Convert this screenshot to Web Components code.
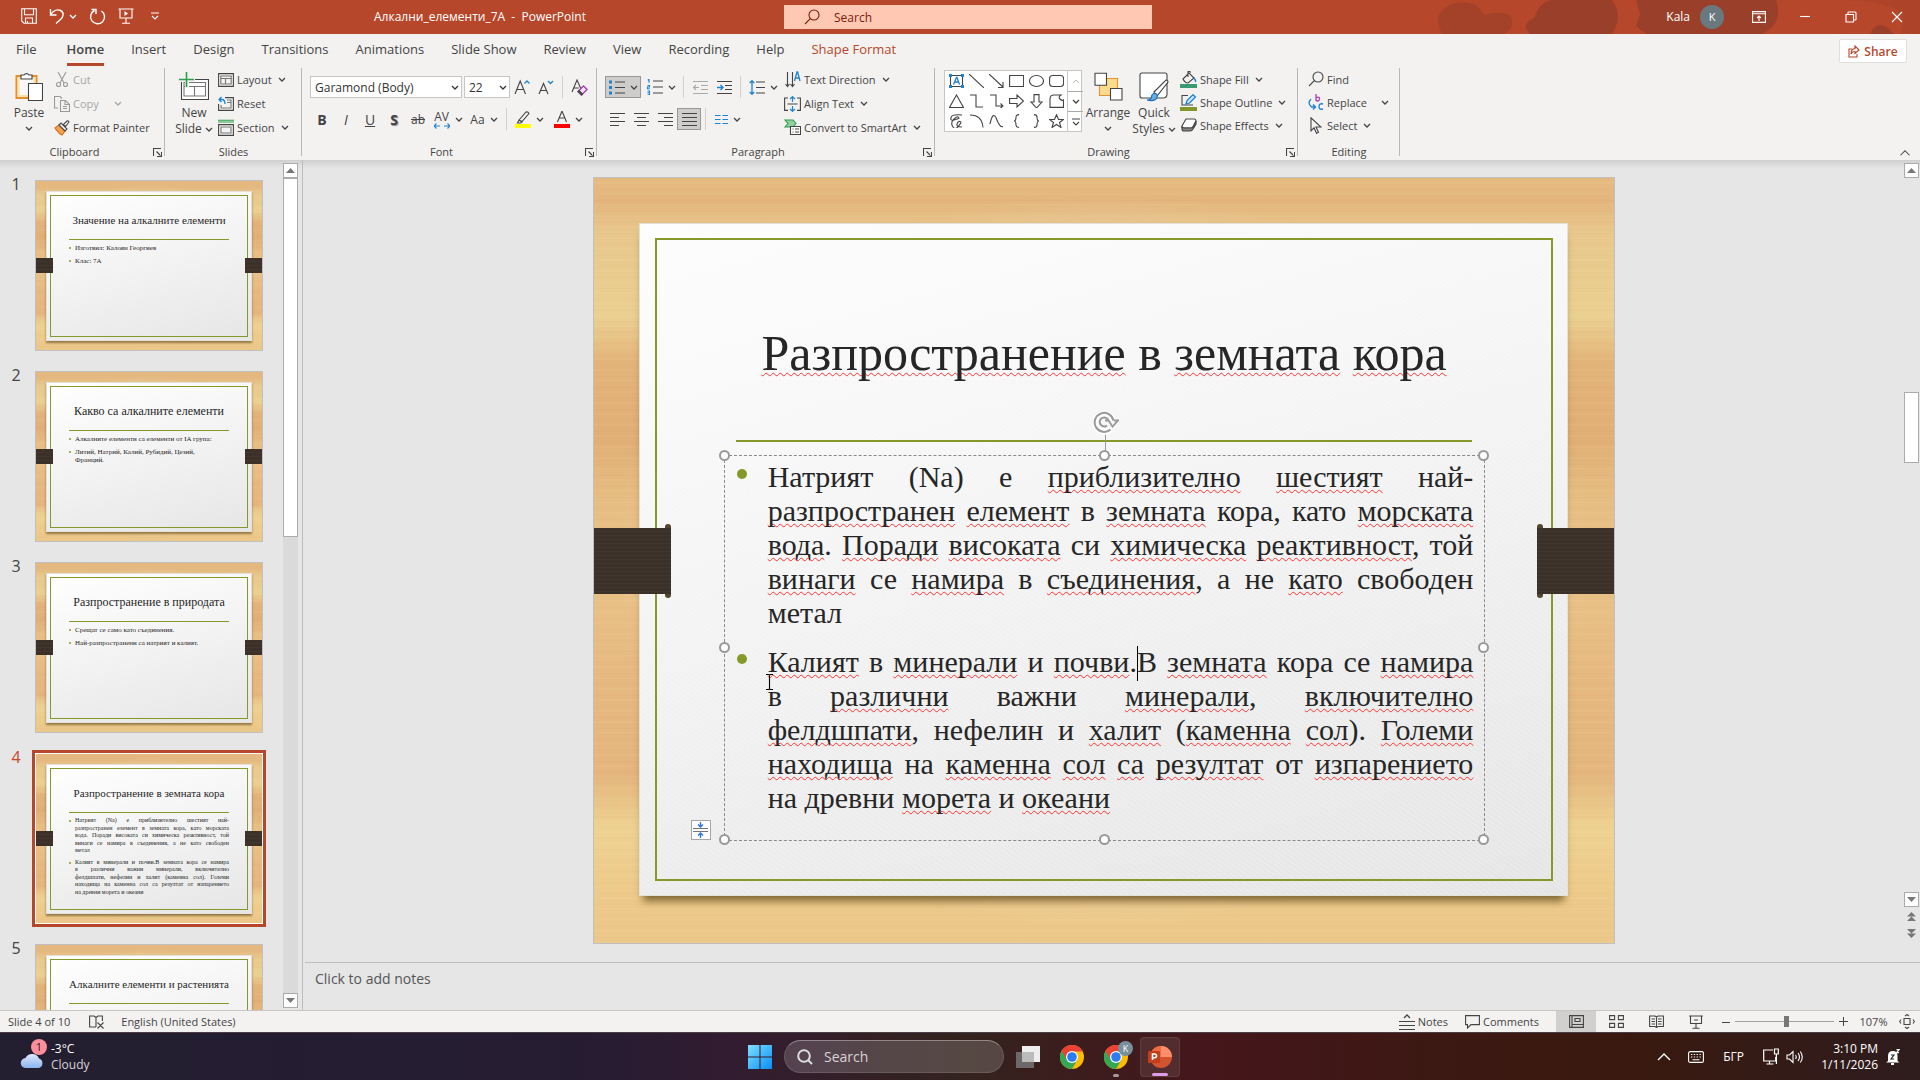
<!DOCTYPE html>
<html lang="en">
<head>
<meta charset="utf-8">
<title>PowerPoint</title>
<style>
    html, body {
        margin: 0;
        height: 100%;
    }
    body {
        font-family: "Open Sans", "Noto Sans", sans-serif;
        font-size: 12px;
        color: #444;
        overflow: hidden;
    }
</style>
</head>
<body>
<power-app></power-app>

<script>
const base = `
    * { box-sizing: border-box; }
    button, input, select, textarea {
        font: inherit;
        color: inherit;
        background: none;
        border: 0;
        padding: 0;
        margin: 0;
        border-radius: 0;
        outline: 0;
    }
    button { display: inline-flex; align-items: center; justify-content: center; white-space: nowrap; }
    a { color: inherit; text-decoration: none; }
`;

// name: [width, height, markup]
const icons = {
    chev: [8, 5, '<path d="M1 1l3 3 3-3" stroke-width="1.3"/>'],
    up: [16, 10, '<path d="M2 8l6-6 6 6" stroke-width="1.4"/>'],
    save: [16, 16, '<path d="M.7.7h14.6v14.6H3L.7 13zM3.5.7v6h9v-6M4.5 15v-5h7v5M6.5 15v-2"/>'],
    undo: [16, 16, '<path d="M1.5 1v6h6M1.5 7C4 3 8 1 11.5 2.5c4 2 3 6.5 0 9L7 15.5" stroke-width="1.4"/>'],
    redo: [17, 17, '<path d="M2.5 1.5h4.5v4.5M5.5 2.5A7 7 0 1 0 12.5 3" stroke-width="1.4"/>'],
    present: [16, 16, '<path d="M.5 1h15M2 1v9h12V1M8 10v5M4 15.3h8"/><path d="M6.5 3v5l3.5-2.5z" fill="currentColor" stroke="none"/>'],
    qat: [8, 8, '<path d="M0 1h8M1 4l3 3 3-3"/>'],
    find: [16, 16, '<circle cx="10" cy="6" r="5"/><path d="M6.3 9.7L1 15"/>'],
    ribbonopt: [14, 12, '<path d="M.6.6h12.8v10.8H.6zM.6 2.8h12.8M7 10V5M5 7l2-2 2 2"/>'],
    min: [12, 12, '<path d="M1 5.5h10"/>'],
    restore: [12, 12, '<path d="M1 3.5h7.5V11H1zM3 3.5V1.5q0-.5.5-.5H10q1 0 1 1v6.5q0 .5-.5.5H8.5"/>'],
    close: [12, 12, '<path d="M1 1l10 10M11 1L1 11"/>'],
    share: [12, 13, '<path d="M4 4H1v8h8V9M7 1l4 4-4 3.5V6.5Q4 6.5 3 9q0-5 4-5.5z"/>'],
    paste: [28, 31, '<path d="M1.5 5h20v22h-20z" fill="#fff" stroke="#e48f2b" stroke-width="2"/><path d="M3.5 7h16v18h-16z" fill="#f8f8f8" stroke="#fae1a5" stroke-width="2"/><path d="M6 8V4h3a3 3 0 0 1 5 0h3v4z" fill="#fff"/><path d="M13.5 12.5h14v17h-14z" fill="#fff"/>'],
    cut: [12, 17, '<path d="M2 1l6 11M10 1L4 12" stroke="#999"/><circle cx="2.5" cy="13.5" r="2" stroke="#999"/><circle cx="9.5" cy="13.5" r="2" stroke="#999"/>'],
    copy: [16, 16, '<path d="M4 12H.5V.5H6l2 2M6.5 4.5h5l4 4v7h-9zM11 4.5V8.5h4M9 10.5h4M9 12.5h4" stroke="#999"/>'],
    painter: [16, 16, '<path d="M1 8l4-3 6 6-3 4q-3-1-4-3.5Q2 10 1 8z" fill="#f5a04a" stroke="#d9701a"/><path d="M5 5l2-2 6 6-2 2z" fill="#fff"/><path d="M9.5 4.5L13 1q1.5-.5 2 1l-3.5 4.5z" fill="#fff"/>'],
    newslide: [30, 29, '<path d="M2.5 7.5h27v20h-27z" fill="#fff"/><path d="M5 10.5h21.5V24H5zM5 14.5h21.5M15.5 14.5V24" stroke="#777"/><path d="M8 0v16M0 8h16" stroke="#f3f2f1" stroke-width="4"/><path d="M7.5 0v15M0 7.5h15" stroke="#2e9e4b" stroke-width="1.6"/>'],
    layout: [16, 14, '<path d="M.6.6h14.8v12.8H.6z"/><path d="M2.8 3h10.4v8H2.8zM2.8 5.5h10.4M7.5 5.5V11" stroke="#777"/>'],
    reset: [16, 15, '<path d="M7 1.6h8.4v12.8H.6V8"/><path d="M9 4h4v8H3V9M9 6.5h4" stroke="#777"/><path d="M3.5 1L1 3.5 3.5 6M1 3.5h3.5Q7 4 7 8" stroke="#1e83d1" stroke-width="1.3"/>'],
    section: [16, 17, '<path d="M0 1.3h16M0 3h16" stroke="#2e9e4b"/><path d="M.6 5.6h14.8v10.8H.6z"/><path d="M3 8h10v6H3z" stroke="#777"/>'],
    launch: [9, 9, '<path d="M.5 8V.5H8M3.5 3.5l4 4M8.5 4v4.5H4"/>'],
    grow: [16, 17, '<path d="M1 15L6.2 2l5.3 13M2.8 10.5h7"/><path d="M10.5 4.5L13 2l2.5 2.5" stroke="#1e83d1" stroke-width="1.3"/>'],
    shrink: [16, 17, '<path d="M1 15L5.5 4.5l4.5 10.5M2.8 11.5h5.5"/><path d="M10 2l2.5 2.5L15 2" stroke="#1e83d1" stroke-width="1.3"/>'],
    clear: [17, 17, '<path d="M1 13L6 1l4 9M2.8 9h5"/><path d="M7 12.5L12.5 7 16 10.5 10.5 16z" fill="#f5e6f7" stroke="#a33fb0" stroke-width="1.4"/><path d="M8 11.5l3.5 3.5-1 1L7 12.5z" fill="#a33fb0"/>'],
    avarrows: [16, 6, '<path d="M0 3h6M2.5.5L0 3l2.5 2.5M10 3h6M13.5.5L16 3l-2.5 2.5" stroke="#1e83d1"/>'],
    hilite: [16, 17, '<path d="M4 9l7-8q2-.5 3 1.5l-7 8zM4 9l3 2-1.5 1H2.5z"/><path d="M0 13h16v4H0z" fill="#ff0" stroke="none"/>'],
    fontcolor: [16, 17, '<path d="M3.5 11L8 0l4.5 11M5 7h6"/><path d="M0 13h16v4H0z" fill="#f00" stroke="none"/>'],
    bullets: [16, 15, '<path d="M6 2h10M6 7.5h10M6 13h10"/><path d="M0 .5h3v3H0zM0 6h3v3H0zM0 11.5h3v3H0z" fill="#1e83d1" stroke="none"/>'],
    numbering: [16, 16, '<path d="M6 2h10M6 8h10M6 14h10"/><path d="M.8 1.2L2 .3v3.5M.5 6.5h2v1.5h-2v1.7h2.3M.5 12h2v3.7h-2M.5 13.8h2" stroke="#1e83d1"/>'],
    outdent: [15, 13, '<path d="M0 .5h15M8 4.5h7M8 8.5h7M0 12.5h15M6 6.5H.8M3 4L.6 6.5 3 9" stroke="#aaa"/>'],
    indent: [15, 13, '<path d="M0 .5h15M8 4.5h7M8 8.5h7M0 12.5h15"/><path d="M0 6.5h6M3.5 4L6 6.5 3.5 9" stroke="#1e83d1" stroke-width="1.4"/>'],
    linespace: [16, 15, '<path d="M7 2h9M7 7.5h9M7 13h9"/><path d="M3 .7v13.6M.7 3L3 .7 5.3 3M.7 12L3 14.3 5.3 12" stroke="#1e83d1" stroke-width="1.3"/>'],
    left: [15, 14, '<path d="M0 1.5h15M0 5.5h9M0 9.5h15M0 13.5h9"/>'],
    center: [15, 14, '<path d="M0 1.5h15M3 5.5h9M0 9.5h15M3 13.5h9"/>'],
    right: [15, 14, '<path d="M0 1.5h15M6 5.5h9M0 9.5h15M6 13.5h9"/>'],
    justify: [15, 14, '<path d="M0 1.5h15M0 5.5h15M0 9.5h15M0 13.5h15"/>'],
    columns: [13, 9, '<path d="M0 .5h5.5M0 4.5h5.5M0 8.5h5.5M7.5.5H13M7.5 4.5H13M7.5 8.5H13" stroke="#1e83d1"/>'],
    textdir: [16, 17, '<path d="M2.5 1v14M.5 13l2 2.5L4.5 13M7.5 1v14M5.5 13l2 2.5L9.5 13"/><path d="M9.5 10l2.5-9h.6L15 10M10.3 7h4" stroke="#1e83d1" stroke-width="1.3"/>'],
    aligntext: [17, 16, '<path d="M4 2H.6v12.4H4M13 2h3.4v12.4H13M3.5 8h10"/><path d="M8.5.7V6M6 3L8.5.7 11 3M8.5 15.3V10M6 13l2.5 2.3L11 13" stroke="#1e83d1" stroke-width="1.2"/>'],
    smartart: [17, 17, '<path d="M1 1h8l3 3.5L9 8H1l3-3.5z" fill="#93cf9f" stroke="#2e9e4b"/><path d="M6.5 7.5h10v8h-10z" fill="#fff"/><path d="M8.5 10h1M8.5 13h1M11 10h4M11 13h4"/>'],
    arrange: [29, 28, '<path d="M5.5 6h18v17h-18z" fill="#fbdc8c" stroke="#e8912d"/><path d="M1 .8h11.5v12H1zM16.5 16h11.5v11.5H16.5z" fill="#fff"/>'],
    quick: [30, 29, '<path d="M1 3q0-2 2-2h23q2 0 2 2v19q0 4-4 4H3q-2 0-2-2z" fill="#fff"/><path d="M15 20L27 8q2 0 2 2L18 24z" fill="#fff"/><path d="M8 28q5 0 4.5-4 2-4 5-2 2 3-1 5.5-3 2-8.5.5z" fill="#66aee6" stroke="#1e6fb5"/>'],
    fill: [17, 17, '<path d="M3 8l6-6 5 5-6 5q-3 0-5-4zM8 6V.7q2-1 2.5 1"/><path d="M14 7q2 2 1.5 4" stroke="#1e83d1" stroke-width="1.5"/><path d="M0 13h17v4H0z" fill="#3a9b72" stroke="none"/>'],
    outline: [17, 17, '<path d="M8 1.5H2V11h11" stroke="#444"/><path d="M6 10l1-3.5L13 .7l2.5 2.3-6 6z" stroke="#1e83d1" fill="#cfe7fa" stroke-width="1.3"/><path d="M0 13h17v4H0z" fill="#84972a" stroke="none"/>'],
    effects: [16, 14, '<path d="M5 1h8q2 0 2 2l-3 6q-1 1-2 1H2q-1.5 0-1-2z" fill="#fff"/><path d="M1 9v2q0 2 2 2h6q2 0 3-2l3-5V3l-3 6q-1 1-2 1H3z" fill="#888"/>'],
    replace: [16, 17, '<path d="M8 0v7M8 4q4-2 3.5 1T8 6.5" stroke="#a33fb0" stroke-width="1.3"/><path d="M3 5Q-1 9 3.5 13H7M5 10.5L7.5 13 5 15.5M15 10q-4-1-4 2.5t4 2.5" stroke="#1e83d1" stroke-width="1.4"/>'],
    select: [12, 17, '<path d="M1 .8v13l3-3 2.5 5.5 2-1L6 10h5z"/>'],
    txt: [15, 14, '<path d="M1.5 1.5h12v11h-12z"/><path d="M4.5 10.5l3-7h.5l2.5 7M5.5 8h4" stroke="#1e83d1" stroke-width="1.3"/><path d="M0 0h3v3H0zM12 0h3v3h-3zM0 11h3v3H0zM12 11h3v3h-3z" fill="#1e83d1" stroke="none"/>'],
    line: [15, 14, '<path d="M0 0l15 14"/>'],
    arrow: [15, 14, '<path d="M0 0l14 13M14 8v5.5H9"/>'],
    rect: [15, 14, '<path d="M.6 1.5h14v11h-14z"/>'],
    oval: [15, 14, '<ellipse cx="7.5" cy="7" rx="7" ry="5.5"/>'],
    rrect: [15, 14, '<rect x=".6" y="1.5" width="14" height="11" rx="3"/>'],
    tri: [15, 14, '<path d="M7.5 1l7 12.5h-14z"/>'],
    elbow: [15, 14, '<path d="M1 1h6v12h7"/>'],
    elbowa: [15, 14, '<path d="M1 1h6v11h7M11.5 9.5L14 12l-2.5 2"/>'],
    rarrow: [15, 14, '<path d="M.6 4.5H8V1l6.5 6L8 13V9.5H.6z"/>'],
    darrow: [15, 14, '<path d="M5 .6h5V8h3l-5.5 6L2 8h3z"/>'],
    blob: [15, 14, '<path d="M1 5q0-4 4-4h7q-3 2-1 4t3.5 1v7.4H1z"/>'],
    scrib: [15, 14, '<path d="M13 1Q3 0 2 3.5t3 2.5 5-2Q9 1 5 5T4 13t7-3q2-2 0-2.5T8 10t5 3"/>'],
    arc: [15, 14, '<path d="M1 1q12 0 13 12.5"/>'],
    curve: [15, 14, '<path d="M1 10Q4-4 7.5 5T14 12.5"/>'],
    lbrace: [15, 14, '<path d="M10 .6Q7 .6 7 3q0 4-2 4 2 0 2 4 0 2.4 3 2.4"/>'],
    rbrace: [15, 14, '<path d="M5 .6Q8 .6 8 3q0 4 2 4-2 0-2 4 0 2.4-3 2.4"/>'],
    star: [15, 14, '<path d="M7.5.8l2 4.7h5l-4 3 1.5 5-4.5-3-4.5 3 1.5-5-4-3h5z"/>'],
    tup: [9, 5, '<path d="M0 5L4.5 0 9 5z" fill="#777" stroke="none"/>'],
    tdown: [9, 5, '<path d="M0 0h9L4.5 5z" fill="#777" stroke="none"/>'],
    prev: [9, 9, '<path d="M0 4.5L4.5 0 9 4.5zM0 9l4.5-4.5L9 9z" fill="#777" stroke="none"/>'],
    next: [9, 9, '<path d="M0 0h9L4.5 4.5zM0 4.5h9L4.5 9z" fill="#777" stroke="none"/>'],
    spell: [15, 14, '<path d="M7 12H.6V1H5l2 1.5L9 1h4.4v5M7 2.5V12M8.5 7.5l6 6M14.5 7.5l-6 6"/>'],
    notes: [16, 16, '<path d="M5 4l3-3 3 3" stroke-width="1.3"/><path d="M0 7.5h16M0 11.5h16M0 15.5h16"/>'],
    comment: [15, 14, '<path d="M.6.6h13.8v9H6L2.5 13V9.6H.6z"/>'],
    normal: [15, 13, '<path d="M.6.6h13.8v11.8H.6zM3 .6v11.8M3 9.5h11"/><path d="M6 3.5h5v3H6z"/>'],
    sorter: [15, 13, '<path d="M.6.6h5v4h-5zM9.4.6h5v4h-5zM.6 8.4h5v4h-5zM9.4 8.4h5v4h-5z"/>'],
    reading: [15, 13, '<path d="M7.5 2v10.5M.6 1h5.5L7.5 2 9 1h5.4v10.5H9l-1.5 1-1.5-1H.6zM2.5 4H6M2.5 6.5H6M2.5 9H6M9 4h3.5M9 6.5h3.5M9 9h3.5"/>'],
    show: [14, 14, '<path d="M0 1h14M1.5 1v7.5h11V1M7 8.5V13M3.5 13.3h7M5 5h4"/>'],
    fit: [16, 15, '<path d="M5 4.5h6v6H5zM6 2l2-1.5L10 2M6 13l2 1.5 2-1.5M2 5.5L.6 7.5 2 9.5M14 5.5l1.4 2L14 9.5"/>'],
    autofit: [15, 16, '<path d="M0 6.5h15M0 9.5h15" stroke="#777"/><path d="M7.5 0v4M5 2.5L7.5 5 10 2.5M7.5 16v-4M5 13.5L7.5 11l2.5 2.5" stroke="#2f74e6" stroke-width="1.4"/>'],
    rotate: [26, 24, '<path d="M18 18A9 9 0 1 1 20 9" stroke="#fff" stroke-width="6"/><path d="M17.5 18.5A9.5 9.5 0 1 1 20.5 9.5M14 14.5A4.5 4.5 0 1 1 15.5 9.5" stroke="#999" stroke-width="2"/><path d="M12 9.5h3.5l4 6 5.500-6h-4" stroke="#999" stroke-width="1.8"/>'],
    ibeam: [7, 16, '<path d="M0 .5h2.5L3.5 1l1-.5H7M3.5 1v14M0 15.5h2.5l1-.5 1 .5H7" stroke="#000"/>'],
    win: [24, 24, '<defs><linearGradient id="w" x1="0" y1="0" x2="1" y2="1"><stop stop-color="#7fe0ff"/><stop offset="1" stop-color="#0a8ef5"/></linearGradient></defs><path d="M0 0h11.5v11.5H0zM12.5 0H24v11.5H12.5zM0 12.5h11.5V24H0zM12.5 12.5H24V24H12.5z" fill="url(#w)" stroke="none"/>'],
    mag: [16, 16, '<circle cx="7" cy="7" r="5.8" stroke-width="2"/><path d="M11 11l4 4" stroke-width="2"/>'],
    taskview: [24, 22, '<path d="M6 0h18v16H6z" fill="#eee" stroke="none"/><path d="M0 6h18v16H0z" fill="#777" opacity=".85" stroke="none"/><path d="M6 6h12v10H6z" fill="#bbb" stroke="none"/>'],
    chrome: [24, 24, '<g stroke="none"><circle cx="12" cy="12" r="12" fill="#fbbc05"/><path d="M1.6 6A12 12 0 0 0 12 24l5.2-9-5.2-3z" fill="#34a853"/><path d="M12 6.5h10.7A12 12 0 0 0 1.6 6l5 8.5z" fill="#ea4335"/><circle cx="12" cy="12" r="6" fill="#fff"/><circle cx="12" cy="12" r="4.8" fill="#2a7df0"/></g>'],
    ppt: [24, 22, '<g stroke="none"><circle cx="13" cy="11" r="11" fill="#d35230"/><path d="M13 0a11 11 0 0 1 11 11H13z" fill="#ff8f6b"/><path d="M13 0v11H2A11 11 0 0 1 13 0z" fill="#ed6c47"/><rect x="0" y="5" width="12" height="12" rx="1" fill="#c43e1c"/></g><path d="M4.5 14V8h2.2a1.8 1.8 0 0 1 0 3.7H4.5" stroke="#fff" stroke-width="1.6"/>'],
    cloud: [24, 18, '<defs><linearGradient id="c" x1="0" y1="0" x2="0" y2="1"><stop stop-color="#dfeafc"/><stop offset="1" stop-color="#8cb4ef"/></linearGradient></defs><path d="M6 17a5 5 0 0 1-.5-10A7.5 7.5 0 0 1 19 7.5 5 5 0 0 1 19 17z" fill="url(#c)" stroke="none"/>'],
    keyboard: [16, 12, '<rect x=".6" y=".6" width="14.8" height="10.8" rx="1.5"/><path d="M3 3.5h1.3M5.8 3.5h1.3M8.6 3.5h1.3M11.5 3.5h1.3M3 6h1.3M5.8 6h1.3M8.6 6h1.3M11.5 6h1.3M4.5 8.8h7"/>'],
    net: [16, 17, '<path d="M10 2H.7v11h12V9M6.5 13v3M3.5 16h7M11.5 1h3.8v5h-3.8zM13.4 6v10" stroke-width="1.2"/>'],
    vol: [17, 14, '<path d="M1 5h2.5L7 1.5v11L3.5 9H1zM9.5 5q1.5 2 0 4M12 3q3 4 0 8M14.3 1.5q4 5.5 0 11"/>'],
    bell: [14, 16, '<path d="M2 12V7q0-5 5-5 4.5 0 4.5 5v5l2 1.5H0z" fill="#fff" stroke="none"/><path d="M5 15h3" stroke-width="2"/><path d="M5 6h3L5 10h3" stroke="#222"/><path d="M10.5.7H13l-2.5 3H13" stroke-width="1.2"/>']
};

const icon = name => {
    const [w, h, body] = icons[name];
    return `<svg class="i" width="${w}" height="${h}" viewBox="0 0 ${w} ${h}" fill="none" stroke="currentColor" stroke-width="1.1" aria-hidden="true">${body}</svg>`;
};

const chev = icon('chev');

class BaseElement extends HTMLElement {
    constructor() {
        super();
        this.attachShadow({ mode: 'open' });
    }

    draw(css, html) {
        this.shadowRoot.innerHTML = `<style>${base}${css}</style>${html}`;
    }
}

class TitleBar extends BaseElement {
    connectedCallback() {
        this.draw(`
            :host {
                display: grid;
                grid-template-columns: 1fr 368px 1fr;
                align-items: center;
                height: 34px;
                padding-left: 16px;
                background: #b7472a;
                color: #fff;
                position: relative;
            }
            .art { position: absolute; right: 0; top: 0; width: 520px; height: 34px; }
            .quick { display: flex; align-items: center; gap: 12px; padding: 0 0 2px 5px; }
            .quick button:nth-child(3) { margin-left: -8px; }
            .quick button:nth-child(6) { margin-left: 5px; }
            .quick h1 { font: inherit; margin: 0 0 0 203px; white-space: pre; }
            .search { display: flex; align-items: center; height: 24px; padding-left: 20px; gap: 14px; background: #ffc8b3; color: #7b1b0a; }
            input { flex: 1; }
            input::placeholder { color: #7b1b0a; opacity: 1; }
            .win { display: flex; align-items: center; justify-content: flex-end; z-index: 1; padding-bottom: 1px; }
            .win button { width: 46px; height: 32px; }
            .avatar { width: 24px; height: 24px; border-radius: 50%; background: #69797e; display: grid; place-items: center; margin: 0 12px 0 10px; font-size: 11px; }
        `, `
            <svg class="art" viewBox="0 0 520 34" preserveAspectRatio="none" fill="#9a402a">
                <path d="M42 34Q30 10 56 3q20-4 28 12 24-6 28 4 2 10-8 15z" opacity=".7"/>
                <path d="M130 34q-10-10 4-16 6-18 20-18h58q12 16 0 34zM246 34l-10-8 4-12-4-14h140q8 24-14 34zM470 34q6-14 18-6l6 6z"/>
                <path d="M440 0h80v34h-20q10-24-14-28-14-6-46-6z" opacity=".35"/>
            </svg>
            <div class="quick">
                <button aria-label="Save">${icon('save')}</button>
                <button aria-label="Undo">${icon('undo')}</button>
                <button aria-label="Undo list">${chev}</button>
                <button aria-label="Redo">${icon('redo')}</button>
                <button aria-label="From beginning">${icon('present')}</button>
                <button aria-label="Customize">${icon('qat')}</button>
                <h1>Алкални_елементи_7А  -  PowerPoint</h1>
            </div>
            <label class="search">${icon('find')}<input placeholder="Search" aria-label="Search"></label>
            <div class="win">
                <span>Kala</span><span class="avatar">K</span>
                <button aria-label="Ribbon display">${icon('ribbonopt')}</button>
                <button aria-label="Minimize">${icon('min')}</button>
                <button aria-label="Restore">${icon('restore')}</button>
                <button aria-label="Close">${icon('close')}</button>
            </div>
        `);
    }
}

class TabStrip extends BaseElement {
    connectedCallback() {
        const tabs = ['File', 'Home', 'Insert', 'Design', 'Transitions', 'Animations', 'Slide Show', 'Review', 'View', 'Recording', 'Help', 'Shape Format'];
        this.draw(`
            :host { display: flex; align-items: center; justify-content: space-between; height: 34px; padding: 0 13px 0 16px; background: #f3f2f1; }
            nav { display: flex; gap: 27px; font-size: 13px; }
            a { line-height: 26px; padding-bottom: 1px; border-bottom: 3px solid transparent; white-space: nowrap; }
            a:first-child { margin-right: 3px; }
            .on { font-weight: 600; border-color: #b7472a; }
            a:last-child, .share { color: #b7472a; }
            .share { height: 24px; width: 68px; gap: 4px; background: #fff; border: 1px solid #e1dfdd; border-radius: 2px; font-weight: 600; }
        `, `
            <nav>${tabs.map(t => `<a href="#"${t === 'Home' ? ' class="on"' : ''}>${t}</a>`).join('')}</nav>
            <button class="share">${icon('share')}Share</button>
        `);
    }
}

class RibbonGroup extends BaseElement {
    connectedCallback() {
        this.draw(`
            :host {
                display: grid;
                grid-template-rows: minmax(0, 1fr) 16px;
                flex: none;
                background: linear-gradient(#b8b8b8, #b8b8b8) right top / 1px calc(100% - 4px) no-repeat;
            }
            .body { display: flex; align-items: flex-start; }
            footer { display: flex; align-items: center; justify-content: center; line-height: 16px; font-size: 11px; position: relative; }
            :host([launcher]) footer { padding-right: 16px; }
            footer button { position: absolute; right: 3px; top: 4px; }
        `, `
            <div class="body"><slot></slot></div>
            <footer>${this.getAttribute('label')}${this.hasAttribute('launcher') ? `<button aria-label="More">${icon('launch')}</button>` : ''}</footer>
        `);
    }
}

class RibbonBar extends BaseElement {
    connectedCallback() {
        const row = (ic, text, more, cls = '') => `<button class="row ${cls}"><span class="ic">${icon(ic)}</span>${text}${more ? chev : ''}</button>`;
        const tool = (ic, cls = '', more) => `<button class="tool ${cls}" aria-label="${ic}">${icon(ic)}${more ? chev : ''}</button>`;
        const shapes = ['txt', 'line', 'arrow', 'rect', 'oval', 'rrect', 'tri', 'elbow', 'elbowa', 'rarrow', 'darrow', 'blob', 'scrib', 'arc', 'curve', 'lbrace', 'rbrace', 'star'];
        this.draw(`
            :host { display: flex; height: 92px; background: #f3f2f1; position: relative; }
            .clip { width: 165px; } .slides { width: 137px; } .font { width: 295px; }
            .para { width: 338px; } .drawing { width: 363px; } .edit { width: 102px; }
            .col { display: flex; flex-direction: column; align-items: flex-start; }
            .row { height: 24px; gap: 3px; font-size: 11px; padding-bottom: 1px; }
            .tight .row { height: 23px; }
            .row .ic { width: 17px; display: flex; justify-content: center; }
            .row > svg { margin-left: 3px; }
            .off { color: #a6a6a6; }
            .big { flex-direction: column; justify-content: flex-start; line-height: 16px; padding-top: 3px; }
            .big > .i:first-child { margin-bottom: 3px; height: 31px; }
            .big > .i:last-child { margin-top: 5px; }
            .big span { display: flex; align-items: center; gap: 3px; }
            .paste { width: 46px; margin: 0 1px 0 6px; }
            .new { width: 44px; margin: 0 1px 0 7px; }
            .arr { width: 44px; margin-left: 4px; }
            .qs { width: 48px; margin-right: 2px; }
            .lines { display: flex; flex-direction: column; gap: 10px; padding: 8px 0 0 8px; }
            .left { width: 187px; }
            .line { display: flex; align-items: center; height: 22px; }
            .combo { display: flex; align-items: center; height: 22px; border: 1px solid #c8c6c4; background: #fff; padding: 0 2px 0 4px; color: #333; }
            .combo select { appearance: none; flex: 1; min-width: 0; }
            .name { width: 152px; margin-right: 2px; }
            .size { width: 46px; }
            .tool { width: 24px; height: 22px; gap: 5px; font-size: 14px; }
            .wide { width: 36px; }
            .av { display: flex; flex-direction: column; align-items: center; font-size: 12px; line-height: 13px; }
            .shadow { text-shadow: 1px 1px 1px #888; }
            .small { font-size: 12px; }
            .on { background: #cfcdcb; border: 1px solid #9a9896; }
            .sep { width: 1px; height: 22px; background: #d2d0ce; margin: 0 4px; }
            .gallery { display: grid; grid-template-columns: 1fr 16px; width: 138px; height: 62px; margin: 2px 0 0 9px; border: 1px solid #c8c6c4; background: #fff; }
            .shapes { display: grid; grid-template-columns: repeat(6, 20px); padding: 0 1px; }
            .bar { display: grid; grid-template-rows: repeat(3, 1fr); border-left: 1px solid #c8c6c4; }
            .bar button + button { border-top: 1px solid #aaa; }
            .dim { color: #bbb; }
            .editcol { margin-left: 9px; }
            .collapse { position: absolute; right: 9px; bottom: 2px; }
            .collapse svg { width: 12px; }
        `, `
            <ribbon-group class="clip" label="Clipboard" launcher>
                <button class="big paste">${icon('paste')}Paste${chev}</button>
                <div class="col">
                    ${row('cut', 'Cut', false, 'off')}
                    <button class="row off"><span class="ic">${icon('copy')}</span>Copy<svg width="3"></svg>${chev}</button>
                    ${row('painter', 'Format Painter')}
                </div>
            </ribbon-group>
            <ribbon-group class="slides" label="Slides">
                <button class="big new">${icon('newslide')}New<span>Slide${chev}</span></button>
                <div class="col">${row('layout', 'Layout', 1)}${row('reset', 'Reset')}${row('section', 'Section', 1)}</div>
            </ribbon-group>
            <ribbon-group class="font" label="Font" launcher>
                <div class="lines">
                    <div class="line">
                        <label class="combo name"><select aria-label="Font"><option>Garamond (Body)</option></select>${chev}</label>
                        <label class="combo size"><select aria-label="Size"><option>22</option></select>${chev}</label>
                        ${tool('grow')}${tool('shrink')}<span class="sep"></span>${tool('clear')}
                    </div>
                    <div class="line">
                        <button class="tool"><b>B</b></button>
                        <button class="tool"><i>I</i></button>
                        <button class="tool"><u>U</u></button>
                        <button class="tool shadow"><b>S</b></button>
                        <button class="tool small"><s>ab</s></button>
                        <button class="tool wide"><span class="av">AV${icon('avarrows')}</span>${chev}</button>
                        <button class="tool wide small">Aa${chev}</button>
                        <span class="sep"></span>
                        ${tool('hilite', 'wide', 1)}<svg width="3"></svg>${tool('fontcolor', 'wide', 1)}
                    </div>
                </div>
            </ribbon-group>
            <ribbon-group class="para" label="Paragraph" launcher>
                <div class="lines left">
                    <div class="line">
                        ${tool('bullets', 'wide on', 1)}<svg width="2"></svg>${tool('numbering', 'wide', 1)}<span class="sep"></span>
                        ${tool('outdent')}${tool('indent')}<span class="sep"></span>${tool('linespace', 'wide', 1)}
                    </div>
                    <div class="line">
                        ${tool('left')}${tool('center')}${tool('right')}${tool('justify', 'on')}<span class="sep"></span>${tool('columns', 'wide', 1)}
                    </div>
                </div>
                <div class="col">${row('textdir', 'Text Direction', 1)}${row('aligntext', 'Align Text', 1)}${row('smartart', 'Convert to SmartArt', 1)}</div>
            </ribbon-group>
            <ribbon-group class="drawing" label="Drawing" launcher>
                <div class="gallery">
                    <div class="shapes">${shapes.map(s => `<button aria-label="${s}">${icon(s)}</button>`).join('')}</div>
                    <div class="bar">
                        <button class="dim" aria-label="Up"><svg width="8" height="5" fill="none" stroke="currentColor"><path d="M1 4l3-3 3 3"/></svg></button>
                        <button aria-label="Down">${chev}</button>
                        <button aria-label="More shapes">${icon('qat')}</button>
                    </div>
                </div>
                <button class="big arr">${icon('arrange')}Arrange${chev}</button>
                <button class="big qs">${icon('quick')}Quick<span>Styles${chev}</span></button>
                <div class="col tight">${row('fill', 'Shape Fill', 1)}${row('outline', 'Shape Outline', 1)}${row('effects', 'Shape Effects', 1)}</div>
            </ribbon-group>
            <ribbon-group class="edit" label="Editing">
                <div class="col tight editcol">
                    ${row('find', 'Find')}
                    <button class="row"><span class="ic">${icon('replace')}</span>Replace<svg width="2"></svg>${chev}</button>
                    ${row('select', 'Select', 1)}
                </div>
            </ribbon-group>
            <button class="collapse" aria-label="Collapse ribbon">${icon('up')}</button>
        `);
    }
}

const deck = [
    { title: 'Значение на алкалните елементи', items: [['Изготвил: Калоян Георгиев'], ['Клас: 7А']] },
    { title: 'Какво са алкалните елементи', large: true, items: [['Алкалните елементи са елементи от IA група:'], ['Литий, Натрий, Калий, Рубидий, Цезий,', 'Франций.']] },
    { title: 'Разпространение в природата', large: true, items: [['Срещат се само като съединения.'], ['Най-разпространени са натрият и калият.']] },
    {
        title: '<u>Разпространение</u> в <u>земната</u> <u>кора</u>',
        justify: true,
        items: [[
            'Натрият (Na) е <u>приблизително</u> <u>шестият</u> най-',
            '<u>разпространен</u> <u>елемент</u> в <u>земната</u> кора, като <u>морската</u>',
            '<u>вода</u>. <u>Поради</u> <u>високата</u> си <u>химическа</u> <u>реактивност</u>, той',
            '<u>винаги</u> се <u>намира</u> в <u>съединения</u>, а не <u>като</u> свободен',
            'метал'
        ], [
            '<u>Калият</u> в <u>минерали</u> и <u>почви</u>.<span class="caret"></span>В <u>земната</u> кора се <u>намира</u>',
            'в <u>различни</u> важни <u>минерали</u>, <u>включително</u>',
            '<u>фелдшпати</u>, нефелин и <u>халит</u> (<u>каменна</u> <u>сол</u>). <u>Големи</u>',
            '<u>находища</u> на <u>каменна</u> <u>сол</u> <u>са</u> <u>резултат</u> от <u>изпарението</u>',
            'на древни <u>морета</u> и <u>океани</u>'
        ]]
    },
    { title: 'Алкалните елементи и растенията', items: [] }
];

class SlideView extends BaseElement {
    connectedCallback() {
        const slide = deck[this.getAttribute('index')];
        const editing = this.hasAttribute('editing');
        this.draw(`
            :host {
                --pad: 45px 46px 47px 45px;
                --frame: 14px 14px 14px 15px;
                --line: 2px;
                --title: 50px;
                --title-line: 60px;
                --title-top: 83px;
                --rule-top: 57px;
                --rule-side: 79px;
                --box: 13px 66px 38px 67px;
                --box-pad: 4px 11px 0 12px;
                --text: 30px;
                --leading: 34px;
                --para: 15px;
                --indent: 31px;
                --dot: 10px;
                --dot-top: 9px;
                --clip-w: 77px;
                --clip-h: 66px;
                --clip-y: 350px;
                display: grid;
                aspect-ratio: 4 / 3;
                padding: var(--pad);
                position: relative;
                overflow: hidden;
                border: 1px solid #c0c0c0;
                font-family: "Liberation Serif", serif;
                color: #262626;
                background:
                    repeating-linear-gradient(rgba(150, 90, 20, .03) 0 1px, transparent 1px 4px, rgba(255, 240, 200, .05) 4px 6px, transparent 6px 11px),
                    radial-gradient(ellipse at 50% 50%, rgba(245, 225, 200, .75) 30%, transparent 68%),
                    linear-gradient(#e6bb82, #e3b57c 3%, #e8c78c 7%, #ebd091 18%, #e3b47a 24%, #e0af76 34%, #e6bd82 42%, #e9c287 52%, #e6b980 65%, #e4b67d 78%, #eed292 85%, #edcb8b 92%, #ebc78a);
            }
            :host([size=thumb]) {
                --pad: 10px 10px 9px;
                --frame: 3px;
                --line: 1px;
                --title: 11px;
                --title-line: 14px;
                --title-top: 17px;
                --rule-top: 12px;
                --rule-side: 18px;
                --box: 4px 14px 0;
                --box-pad: 0 4px;
                --text: 7px;
                --leading: 8px;
                --para: 5px;
                --indent: 6px;
                --dot: 2px;
                --dot-top: 3px;
                --clip-w: 17px;
                --clip-h: 15px;
                --clip-y: 77px;
            }
            .paper {
                display: grid;
                min-height: 0;
                border: 1px solid #e4e1da;
                background: linear-gradient(165deg, #fff, #f5f5f5 40%, #e6e6e6);
                box-shadow: 0 9px 8px -4px rgba(90, 65, 20, .75);
            }
            :host([editing]) .paper {
                background: repeating-linear-gradient(35deg, rgba(255, 255, 255, .2) 0 1px, transparent 1px 4px), linear-gradient(165deg, #fdfdfd, #f5f5f5 40%, #e5e5e5);
            }
            :host([size=thumb]) .paper { box-shadow: 0 2px 2px rgba(90, 65, 20, .6); }
            .frame { margin: var(--frame); border: var(--line) solid #84992a; display: flex; flex-direction: column; min-height: 0; min-width: 0; }
            h2 { margin: 0; padding-top: var(--title-top); font-weight: 400; font-size: var(--title); line-height: var(--title-line); text-align: center; white-space: nowrap; }
            .large { font-size: 12px; }
            hr { margin: var(--rule-top) var(--rule-side) 0; border: 0; border-top: var(--line) solid #84992a; align-self: stretch; }
            .box { flex: 1; position: relative; margin: var(--box); padding: var(--box-pad); font-size: var(--text); line-height: var(--leading); border: 0 dashed #8a8a8a; min-height: 0; }
            :host([size=thumb]) .justify { font-size: 6px; line-height: 1.25; }
            :host([editing]) .box { border-width: 1px; }
            ul { list-style: none; margin: 0; padding: 0; }
            li { display: grid; grid-template-columns: var(--indent) 1fr; margin-bottom: var(--para); }
            :host([size=thumb]) .justify li { margin-bottom: 4px; }
            li::before { content: ""; width: var(--dot); height: var(--dot); margin-top: var(--dot-top); border-radius: 50%; background: #84992a; }
            p { margin: 0; grid-column: 2; min-width: 0; }
            .ln { display: block; white-space: nowrap; }
            :host([editing]) .ln { height: var(--leading); }
            .justify .ln:not(:last-child) { text-align: justify; text-align-last: justify; }
            u { text-decoration: none; }
            :host([editing]) u { text-decoration: underline wavy #f33 1px; text-decoration-skip-ink: none; text-underline-offset: 2px; }
            .caret { display: inline-block; width: 1px; height: 35px; margin-right: -1px; vertical-align: -9px; background: #000; }
            :host(:not([editing])) .caret { display: none; }
            .clip { position: absolute; top: var(--clip-y); width: var(--clip-w); height: var(--clip-h); background: repeating-linear-gradient(#3c3129 0 3px, #42372e 3px 4px); }
            .clip.l { left: 0; }
            .clip.r { right: 0; }
            :host([editing]) .clip::before, :host([editing]) .clip::after { content: ""; position: absolute; top: -4px; height: 4px; width: 6px; right: 0; border-radius: 3px 3px 0 0; background: #54452f; }
            :host([editing]) .clip::after { top: 100%; border-radius: 0 0 3px 3px; }
            :host([editing]) .clip.r::before, :host([editing]) .clip.r::after { right: auto; left: 0; }
            .h { position: absolute; width: 11px; height: 11px; margin: -6px; border: 2px solid #999; border-radius: 50%; background: #fff; }
            .stem { position: absolute; left: 50%; top: -26px; width: 1px; height: 26px; background: #999; }
            .rot { position: absolute; left: calc(50% - 12px); top: -48px; }
            .fit { position: absolute; left: -34px; bottom: 0; width: 20px; height: 20px; border: 1px solid #a6a6a6; background: #fff; }
            .cursor { position: absolute; left: 41px; top: 207px; }
        `, `
            <div class="paper"><div class="frame">
                <h2${slide.large ? ' class="large"' : ''}>${slide.title}</h2>
                <hr>
                <div class="box${slide.justify ? ' justify' : ''}">
                    <ul>${slide.items.map(lines => `<li><p>${lines.map(l => `<span class="ln">${l}</span>`).join('')}</p></li>`).join('')}</ul>
                    ${editing ? `
                        <i class="stem"></i><span class="rot">${icon('rotate')}</span>
                        ${[0, 50, 100].map(y => [0, 50, 100].map(x => x === 50 && y === 50 ? '' : `<i class="h" style="left:${x}%;top:${y}%"></i>`).join('')).join('')}
                        <button class="fit" aria-label="AutoFit options">${icon('autofit')}</button>
                        <span class="cursor">${icon('ibeam')}</span>
                    ` : ''}
                </div>
            </div></div>
            <div class="clip l"></div><div class="clip r"></div>
        `);
    }
}

class ScrollStrip extends BaseElement {
    connectedCallback() {
        this.draw(`
            :host { display: flex; flex-direction: column; width: 15px; }
            button { height: 15px; flex: none; background: #fff; border: 1px solid #ababab; }
            .track { flex: 1; display: grid; grid-template-rows: var(--rows); background: var(--track, transparent); }
            .thumb { grid-row: 2; background: #fff; border: 1px solid #ababab; }
        `, `
            <button aria-label="Scroll up">${icon('tup')}</button>
            <div class="track"><div class="thumb"></div></div>
            <button aria-label="Scroll down">${icon('tdown')}</button>
        `);
    }
}

class ThumbPane extends BaseElement {
    connectedCallback() {
        this.draw(`
            :host { display: flex; width: 303px; padding: 3px 4px 2px 0; border-right: 1px solid #bdbdbd; overflow: hidden; min-height: 0; }
            ol { flex: 1; list-style: none; margin: 0 0 -2px; padding: 17px 0 0; display: flex; flex-direction: column; gap: 20px; overflow: hidden; min-height: 0; }
            li { display: grid; grid-template-columns: 35px 228px; font-size: 16px; line-height: 20px; flex: none; }
            li > span { text-align: center; padding-right: 3px; margin-top: -6px; height: 20px; }
            .on { color: #c8472a; }
            .on slide-view { outline: 3px solid #b7472a; border-color: #fff; }
            scroll-strip { --rows: 0 44% 1fr; --track: #dadada; }
        `, `
            <ol>${deck.map((s, i) => `<li class="${i === 3 ? 'on' : ''}"><span>${i + 1}</span><slide-view size="thumb" index="${i}"></slide-view></li>`).join('')}</ol>
            <scroll-strip></scroll-strip>
        `);
    }
}

class EditPane extends BaseElement {
    connectedCallback() {
        this.draw(`
            :host { display: grid; grid-template-rows: 1fr 48px; flex: 1; min-width: 0; min-height: 0; padding-left: 2px; }
            .stage { display: grid; grid-template-columns: 1fr auto; min-height: 0; }
            .canvas { display: flex; justify-content: center; padding: 17px 1px 18px 0; min-height: 0; }
            slide-view { height: 100%; }
            .side { display: flex; flex-direction: column; align-items: center; gap: 8px; padding: 3px 1px 24px 0; }
            scroll-strip { flex: 1; --rows: 30% 71px 1fr; margin-bottom: -3px; }
            .notes { border-top: 1px solid #bdbdbd; padding: 6px 10px; display: flex; align-items: flex-start; }
            textarea { flex: 1; height: 20px; line-height: 20px; resize: none; font-size: 14px; }
            textarea::placeholder { color: #555; opacity: 1; }
        `, `
            <div class="stage">
                <div class="canvas"><slide-view editing index="3"></slide-view></div>
                <div class="side">
                    <scroll-strip></scroll-strip>
                    <button aria-label="Previous slide">${icon('prev')}</button>
                    <button aria-label="Next slide">${icon('next')}</button>
                </div>
            </div>
            <div class="notes"><textarea aria-label="Notes" placeholder="Click to add notes"></textarea></div>
        `);
    }
}

class StatusBar extends BaseElement {
    connectedCallback() {
        this.draw(`
            :host { display: flex; align-items: center; height: 22px; padding: 0 5px 0 8px; background: #f3f2f1; border-top: 1px solid #c6c6c6; font-size: 11px; white-space: nowrap; }
            .lang { margin-left: 17px; }
            .spell { margin-left: 19px; }
            .push { flex: 1; }
            .txt { gap: 3px; margin-right: 17px; }
            .view { width: 40px; height: 21px; }
            .view:nth-of-type(7) { margin-right: 5px; }
            .on { background: #d2d0ce; }
            input { appearance: none; width: 99px; height: 12px; margin: 0 5px; background: linear-gradient(#a0a0a0, #a0a0a0) center / 100% 1px no-repeat; }
            input::-webkit-slider-thumb { appearance: none; width: 5px; height: 11px; background: #777; }
            .sign { width: 9px; }
            .pct { width: 51px; text-align: center; }
        `, `
            <span>Slide 4 of 10</span>
            <button class="spell" aria-label="Spelling">${icon('spell')}</button>
            <span class="lang">English (United States)</span>
            <span class="push"></span>
            <button class="txt">${icon('notes')}Notes</button>
            <button class="txt">${icon('comment')}Comments</button>
            <button class="view on" aria-label="Normal">${icon('normal')}</button>
            <button class="view" aria-label="Slide sorter">${icon('sorter')}</button>
            <button class="view" aria-label="Reading view">${icon('reading')}</button>
            <button class="view" aria-label="Slide show">${icon('show')}</button>
            <button class="sign" aria-label="Zoom out"><svg width="8" height="8" stroke="#444"><path d="M0 4.5h8"/></svg></button>
            <input type="range" aria-label="Zoom" min="0" max="100" value="52">
            <button class="sign" aria-label="Zoom in"><svg width="9" height="9" stroke="#444"><path d="M0 4.5h9M4.5 0v9"/></svg></button>
            <span class="pct">107%</span>
            <button aria-label="Fit">${icon('fit')}</button>
        `);
    }
}

class TaskBar extends BaseElement {
    connectedCallback() {
        this.draw(`
            :host {
                display: grid;
                grid-template-columns: 1fr auto 1fr;
                align-items: center;
                height: 48px;
                padding: 0 20px;
                color: #fff;
                border-top: 1px solid #4a3f45;
                background: linear-gradient(90deg, #231e30, #251c32 30%, #321c31 38%, #33231e 50%, #45161b 63%, #3c1913 75%, #39190f 85%, #2e1c1e);
            }
            .weather { display: flex; align-items: center; gap: 7px; line-height: 16px; justify-self: start; text-align: left; color: #d8d3d8; }
            .weather b { display: block; font-weight: 400; color: #fff; }
            .pic { position: relative; padding-top: 6px; display: flex; }
            .badge { position: absolute; right: -3px; top: -6px; width: 16px; height: 16px; border-radius: 50%; background: #ff8f9b; color: #222; font-size: 11px; text-align: center; }
            .mid { display: flex; align-items: center; gap: 4px; }
            .app { width: 40px; height: 40px; border-radius: 4px; position: relative; }
            .on { background: rgba(255, 255, 255, .09); border: 1px solid rgba(255, 255, 255, .08); }
            .app::after { content: ""; position: absolute; bottom: 0; width: var(--bar, 0); height: 3px; border-radius: 2px; background: var(--c); }
            .k { position: absolute; right: 3px; top: 4px; width: 15px; height: 15px; border-radius: 50%; background: #78909c; font-size: 9px; line-height: 15px; }
            label { display: flex; align-items: center; gap: 11px; width: 220px; height: 33px; border-radius: 17px; padding-left: 12px; background: rgba(255, 255, 255, .17); border: 1px solid rgba(255, 255, 255, .12); border-top-color: rgba(255, 255, 255, .35); color: #ddd; font-size: 14px; }
            input { flex: 1; min-width: 0; }
            input::placeholder { color: #d8d3d3; opacity: 1; }
            .tray { justify-self: end; display: flex; align-items: center; }
            .tray button { margin-right: 19px; }
            .tray button:first-child { margin-right: 16px; }
            .tray .net { margin-right: 7px; }
            .tray .clock { display: block; text-align: right; line-height: 16px; margin: 0 8px 0 -15px; width: 71px; }
            .tray .bell { margin: 0; }
        `, `
            <button class="weather"><span class="pic">${icon('cloud')}<span class="badge">1</span></span><span><b>-3°C</b>Cloudy</span></button>
            <div class="mid">
                <button class="app" aria-label="Start">${icon('win')}</button>
                <label>${icon('mag')}<input placeholder="Search" aria-label="Search"></label>
                <button class="app" aria-label="Task view">${icon('taskview')}</button>
                <button class="app" aria-label="Chrome">${icon('chrome')}</button>
                <button class="app" style="--bar: 6px; --c: #a89a9a">${icon('chrome')}<span class="k">K</span></button>
                <button class="app on" aria-label="PowerPoint" style="--bar: 16px; --c: #dc9be6">${icon('ppt')}</button>
            </div>
            <div class="tray">
                <button aria-label="Hidden icons">${icon('up')}</button>
                <button aria-label="Keyboard">${icon('keyboard')}</button>
                <button>БГР</button>
                <button class="net" aria-label="Network">${icon('net')}</button>
                <button aria-label="Volume">${icon('vol')}</button>
                <button class="clock">3:10 PM<br>1/11/2026</button>
                <button class="bell" aria-label="Notifications">${icon('bell')}</button>
            </div>
        `);
    }
}

class PowerApp extends BaseElement {
    connectedCallback() {
        this.draw(`
            :host { display: flex; flex-direction: column; height: 100vh; background: #e6e6e6; }
            ribbon-bar, title-bar, tab-strip, status-bar, task-bar { flex: none; }
            main { flex: 1; display: flex; min-height: 0; background: linear-gradient(#cfcfcf, #e6e6e6 8px); }
        `, `
            <title-bar></title-bar>
            <tab-strip></tab-strip>
            <ribbon-bar></ribbon-bar>
            <main><thumb-pane></thumb-pane><edit-pane></edit-pane></main>
            <status-bar></status-bar>
            <task-bar></task-bar>
        `);
    }
}

customElements.define('title-bar', TitleBar);
customElements.define('tab-strip', TabStrip);
customElements.define('ribbon-group', RibbonGroup);
customElements.define('ribbon-bar', RibbonBar);
customElements.define('slide-view', SlideView);
customElements.define('scroll-strip', ScrollStrip);
customElements.define('thumb-pane', ThumbPane);
customElements.define('edit-pane', EditPane);
customElements.define('status-bar', StatusBar);
customElements.define('task-bar', TaskBar);
customElements.define('power-app', PowerApp);
</script>
</body>
</html>
